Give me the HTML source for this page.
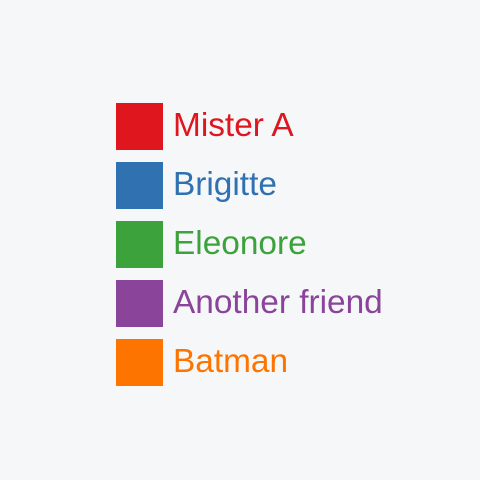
<!DOCTYPE html>
<html><head><style>
body{margin:0;width:480px;height:480px;background:#f6f7f9;position:relative;font-family:"Liberation Sans",sans-serif;}
.r{position:absolute;left:116px;height:47px;}
.s{position:absolute;left:0;top:0;width:47px;height:47px;}
.t{position:absolute;left:57px;top:-1px;font-size:33.4px;line-height:47px;white-space:nowrap;}
</style></head><body>
<div class="r" style="top:103px"><div class="s" style="background:#e0161e"></div><div class="t" style="color:#e0161e">Mister A</div></div>
<div class="r" style="top:162px"><div class="s" style="background:#2f71b1"></div><div class="t" style="color:#2f71b1">Brigitte</div></div>
<div class="r" style="top:221px"><div class="s" style="background:#3ca23b"></div><div class="t" style="color:#3ca23b">Eleonore</div></div>
<div class="r" style="top:280px"><div class="s" style="background:#8a4499"></div><div class="t" style="color:#8a4499">Another friend</div></div>
<div class="r" style="top:339px"><div class="s" style="background:#fe7400"></div><div class="t" style="color:#fe7400">Batman</div></div>
</body></html>
